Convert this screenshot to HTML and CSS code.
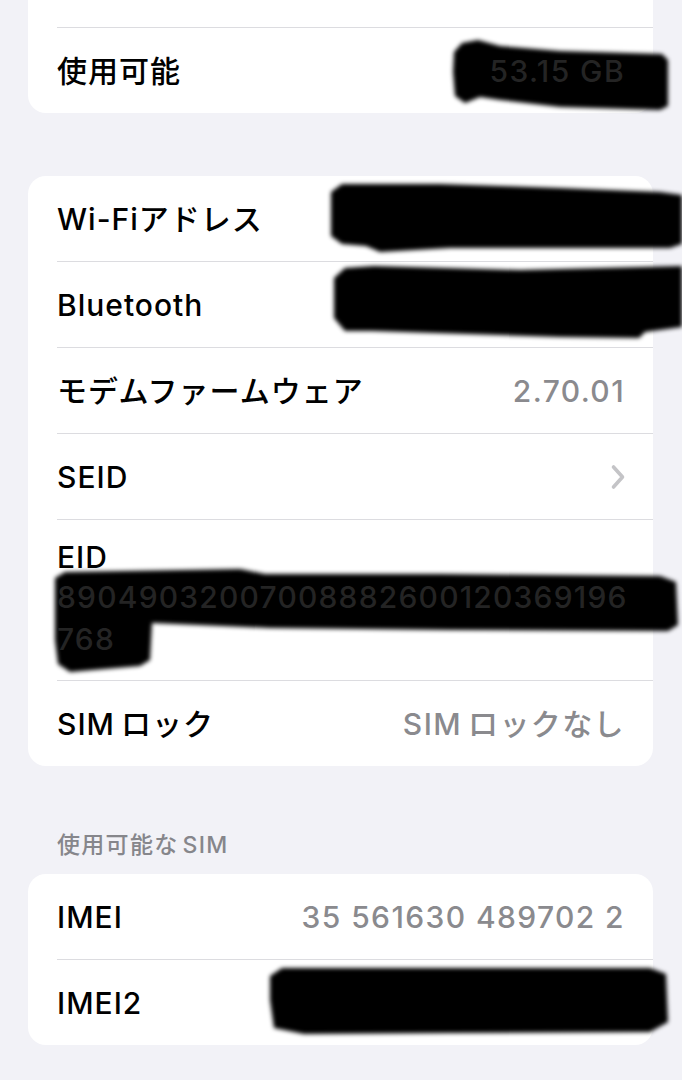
FILE: index.html
```html
<!DOCTYPE html>
<html lang="ja">
<head>
<meta charset="utf-8">
<title>情報</title>
<link rel="stylesheet" href="styles.css">
</head>
<body>
<div class="screen">
  <section class="card card-cut">
    <div class="row row-partial"></div>
    <div class="row">
      <span class="label">使用可能</span>
      <span class="value redacted">53.15 GB</span>
    </div>
  </section>

  <section class="card card-info">
    <div class="row"><span class="label">Wi-Fiアドレス</span></div>
    <div class="row"><span class="label">Bluetooth</span></div>
    <div class="row">
      <span class="label">モデムファームウェア</span>
      <span class="value">2.70.01</span>
    </div>
    <div class="row">
      <span class="label">SEID</span>
      <svg class="chevron" width="16" height="26" viewBox="0 0 16 26" aria-hidden="true">
        <polyline points="3.5,3 12.5,13 3.5,23" fill="none" stroke="#c4c4c7" stroke-width="3.6" stroke-linecap="round" stroke-linejoin="round"/>
      </svg>
    </div>
    <div class="row row-tall">
      <span class="label label-top">EID</span>
      <div class="value-block redacted">
        <span class="line">89049032007008882600120369196</span>
        <span class="line">768</span>
      </div>
    </div>
    <div class="row">
      <span class="label"><span class="latin">SIM</span>ロック</span>
      <span class="value"><span class="latin">SIM</span>ロックなし</span>
    </div>
  </section>

  <div class="section-header">使用可能な<span class="latin-after">SIM</span></div>

  <section class="card">
    <div class="row">
      <span class="label">IMEI</span>
      <span class="value">35 561630 489702 2</span>
    </div>
    <div class="row"><span class="label">IMEI2</span></div>
  </section>

  <svg class="scribbles" width="682" height="1080" viewBox="0 0 682 1080" aria-hidden="true">
    <defs>
      <filter id="soft" x="-5%" y="-20%" width="110%" height="140%">
        <feGaussianBlur stdDeviation="2"/>
      </filter>
    </defs>
    <g fill="#050505" filter="url(#soft)">
      <polygon points="454,52 462,43 478,40 500,46 560,51 662,54 668,60 668,106 660,110 560,107 500,100 480,97 465,103 455,96 453,72"/>
      <polygon points="331,192 342,184 440,184 560,188 660,192 682,195 682,244 670,248 560,248 450,248 380,252 366,246 342,244 331,236"/>
      <polygon points="334,278 345,268 374,266 520,270 682,266 682,327 645,332 639,338 560,337 435,333 372,331 345,331 334,318"/>
      <polygon points="55,578 65,572 240,569 265,574 440,574 660,576 676,582 678,625 668,631 450,630 270,628 152,623 150,660 140,666 70,672 58,664 55,640 55,600"/>
      <polygon points="270,976 282,968 650,968 666,974 668,1022 650,1032 450,1033 304,1034 274,1028 270,1000"/>
    </g>
  </svg>
</div>
</body>
</html>
```

FILE: styles.css
```css
html, body {
  margin: 0;
  padding: 0;
  background: #f2f2f7;
}

body {
  font-family: "Inter", "Noto Sans CJK JP", sans-serif;
  color: #000;
  -webkit-font-smoothing: antialiased;
}

.screen {
  position: relative;
  width: 682px;
  height: 1080px;
  overflow: hidden;
  padding: 0 29px 0 28px;
  box-sizing: border-box;
}

.card {
  background: #fff;
  border-radius: 18px;
  overflow: hidden;
}

.card-cut {
  border-radius: 0 0 18px 18px;
}

.card-info {
  margin-top: 63px;
}

.row {
  display: flex;
  align-items: center;
  justify-content: space-between;
  height: 85px;
  margin-left: 29px;
  padding-right: 28px;
  border-top: 1px solid #dcdce0;
  box-sizing: content-box;
}

.row:first-child {
  border-top: none;
}

.row-partial {
  height: 27px;
}

.row-tall {
  height: auto;
  flex-direction: column;
  align-items: flex-start;
  justify-content: flex-start;
  padding-top: 18px;
  padding-bottom: 20px;
  box-sizing: border-box;
  min-height: 161px;
}

.label {
  font-size: 30px;
  font-weight: 500;
  line-height: 38px;
  letter-spacing: 1px;
  white-space: nowrap;
}

.label-top {
  line-height: 38px;
}

.value {
  font-size: 30px;
  font-weight: 500;
  line-height: 38px;
  letter-spacing: 1.4px;
  color: #8a8a8e;
  white-space: nowrap;
}

.value-block {
  display: flex;
  flex-direction: column;
  font-size: 30px;
  font-weight: 500;
  line-height: 42px;
  letter-spacing: 1.2px;
}

.line {
  display: block;
}

.latin {
  margin-right: 6px;
}

.latin-after {
  margin-left: 4px;
}

.chevron {
  display: block;
  margin-right: -1px;
}

.section-header {
  padding: 64px 0 14px 29px;
  font-size: 23px;
  line-height: 30px;
  font-weight: 500;
  letter-spacing: 1.3px;
  color: #86868b;
}

.scribbles {
  position: absolute;
  top: 0;
  left: 0;
  z-index: 1;
  pointer-events: none;
}

.redacted {
  position: relative;
  z-index: 2;
  color: #242424;
}
```
